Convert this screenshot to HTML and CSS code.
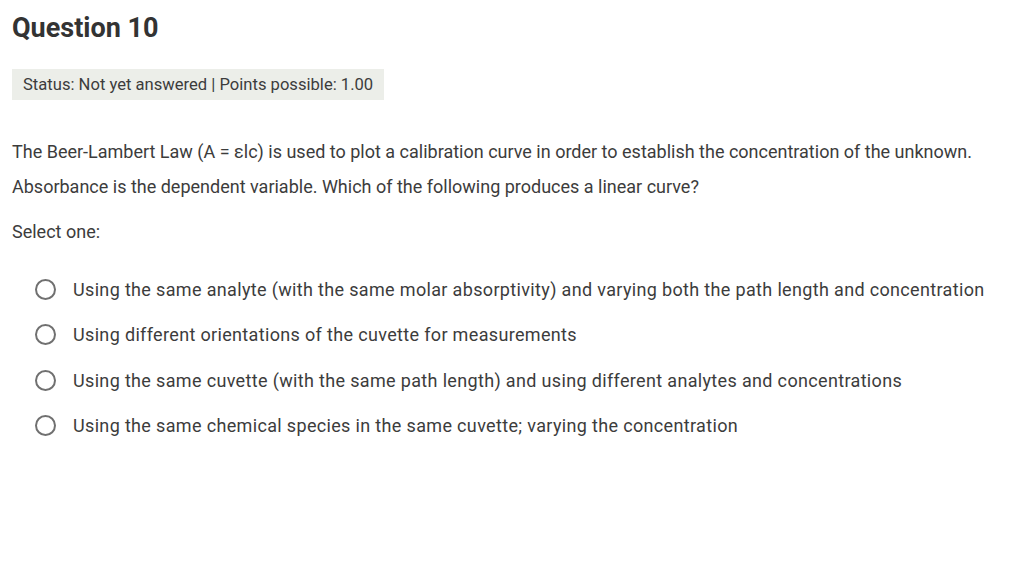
FILE: index.html
```html
<!DOCTYPE html>
<html>
<head>
<meta charset="utf-8">
<link rel="stylesheet" href="styles.css">
</head>
<body>
<div class="page">
  <h1 class="title">Question 10</h1>
  <div class="status">Status: Not yet answered | Points possible: 1.00</div>
  <div class="question">
    <p class="qline">The Beer-Lambert Law (A = εlc) is used to plot a calibration curve in order to establish the concentration of the unknown.</p>
    <p class="qline">Absorbance is the dependent variable. Which of the following produces a linear curve?</p>
  </div>
  <p class="select">Select one:</p>
  <ul class="options">
    <li class="option"><span class="radio"></span><span class="label">Using the same analyte (with the same molar absorptivity) and varying both the path length and concentration</span></li>
    <li class="option"><span class="radio"></span><span class="label">Using different orientations of the cuvette for measurements</span></li>
    <li class="option"><span class="radio"></span><span class="label">Using the same cuvette (with the same path length) and using different analytes and concentrations</span></li>
    <li class="option"><span class="radio"></span><span class="label">Using the same chemical species in the same cuvette; varying the concentration</span></li>
  </ul>
</div>
</body>
</html>
```
FILE: styles.css
```css
html, body {
  margin: 0;
  padding: 0;
  background: #ffffff;
}
body {
  font-family: Roboto, "Liberation Sans", sans-serif;
  color: #3c3c3c;
}
.page {
  padding: 10px 12px 0 12px;
}
.title {
  margin: 0;
  font-size: 27px;
  font-weight: 700;
  line-height: 36px;
  color: #333333;
}
.status {
  display: inline-block;
  margin-top: 23px;
  background: #eceee9;
  padding: 0 11px;
  height: 31px;
  line-height: 32px;
  font-size: 16.6px;
}
.question {
  margin-top: 34px;
}
.qline {
  margin: 0;
  font-size: 18px;
  line-height: 35px;
}
.select {
  margin: 10px 0 0 0;
  font-size: 18px;
  line-height: 35px;
}
.options {
  list-style: none;
  margin: 18px 0 0 0;
  padding: 0 0 0 23px;
}
.option {
  display: flex;
  align-items: center;
  height: 45.3px;
}
.radio {
  width: 17px;
  height: 17px;
  border: 2px solid #707070;
  border-radius: 50%;
  flex: none;
  margin-right: 17px;
}
.label {
  font-size: 18px;
  letter-spacing: 0.34px;
}
```
